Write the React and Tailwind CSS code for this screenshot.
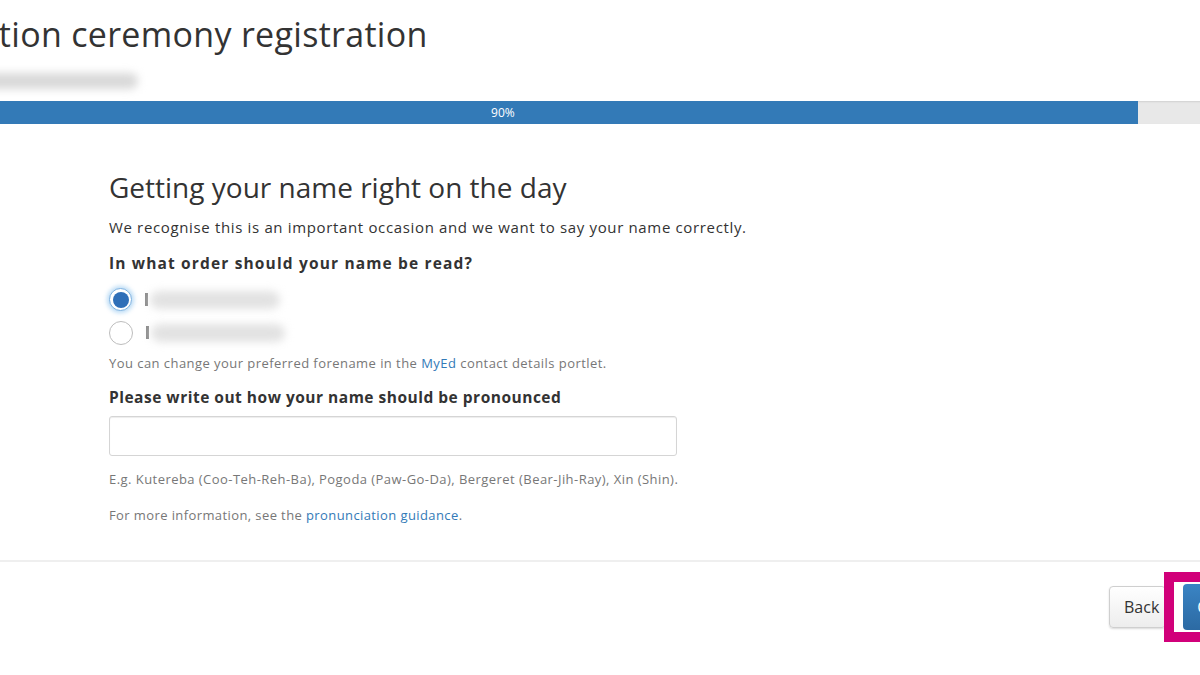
const font = { fontFamily: '"Open Sans", "Noto Sans", sans-serif' };

const Blur = ({ className }) => (
  <div className={`rounded-full blur-[4px] ${className}`} />
);

const Radio = ({ checked, blurWidth }) => (
  <label className="flex h-[33px] items-center gap-[13px]">
    {checked ? (
      <span className="flex h-[23px] w-[23px] items-center justify-center rounded-full border border-[#7fb2e0] bg-white shadow-[0_0_4px_2px_rgba(102,175,233,0.45)]">
        <span className="h-[16px] w-[16px] rounded-full bg-[#2f6fb8]" />
      </span>
    ) : (
      <span className="h-[24px] w-[24px] rounded-full border border-[#bdbdbd] bg-white" />
    )}
    <span className="flex items-center gap-[2px]">
      <span className="h-[13px] w-[3px] bg-[#8a8a8a] blur-[0.5px]" />
      <Blur className={`h-[18px] bg-[#e2e2e2] ${blurWidth}`} />
    </span>
  </label>
);

export default function App() {
  return (
    <div className="h-[675px] w-[1200px] overflow-hidden bg-white text-[#333]" style={font}>
      <div className="-ml-[132px] w-[1411px]">
        <div className="px-[15px] pt-[12px]">
          <h1 className="-ml-[4px] text-[34px] leading-[44px] font-normal tracking-[0.3px] text-[#333]">
            Graduation ceremony registration
          </h1>
          <div className="mt-[15px] flex h-[20px] items-center">
            <Blur className="h-[16px] w-[255px] bg-[#d9d9d9]" />
          </div>
        </div>

        <div className="mt-[10px] flex h-[23px] w-full bg-[#e8e8e8] shadow-[inset_0_1px_2px_rgba(0,0,0,0.1)]">
          <div className="flex w-[90%] items-center justify-center bg-[#337ab7] text-[12px] text-white">
            90%
          </div>
        </div>

        <div className="ml-[241px] w-[640px] pt-[46px]">
          <h2 className="text-[28px] leading-[34px] font-normal text-[#333]">
            Getting your name right on the day
          </h2>
          <p className="mt-[13px] text-[15px] leading-[20px] tracking-[0.65px] text-[#333]">
            We recognise this is an important occasion and we want to say your name correctly.
          </p>
          <p className="mt-[16px] text-[15.5px] leading-[20px] font-bold tracking-[1.15px] text-[#333]">
            In what order should your name be read?
          </p>
          <div className="mt-[10px] flex flex-col">
            <Radio checked blurWidth="w-[130px]" />
            <Radio blurWidth="w-[134px]" />
          </div>
          <p className="mt-[5px] text-[13px] leading-[18px] tracking-[0.45px] text-[#777]">
            You can change your preferred forename in the{' '}
            <span className="text-[#337ab7]">MyEd</span> contact details portlet.
          </p>
          <p className="mt-[15px] text-[15.5px] leading-[20px] font-bold tracking-[0.5px] text-[#333]">
            Please write out how your name should be pronounced
          </p>
          <input
            className="mt-[9px] block h-[40px] w-[568px] rounded-[3px] border border-[#d5d5d5] bg-white px-3 shadow-[inset_0_1px_1px_rgba(0,0,0,0.075)] outline-none"
            type="text"
          />
          <p className="mt-[14px] text-[13px] leading-[18px] tracking-[0.45px] text-[#777]">
            E.g. Kutereba (Coo-Teh-Reh-Ba), Pogoda (Paw-Go-Da), Bergeret (Bear-Jih-Ray), Xin (Shin).
          </p>
          <p className="mt-[18px] text-[13px] leading-[18px] tracking-[0.4px] text-[#777]">
            For more information, see the{' '}
            <span className="text-[#337ab7]">pronunciation guidance</span>.
          </p>
        </div>

        <div className="mt-[36px] h-[2px] w-full bg-[#efefef]" />

        <div className="flex items-center pt-[10px] pl-[1241px]">
          <button className="h-[42px] rounded-[4px] border border-[#cfcfcf] bg-gradient-to-b from-white to-[#ededed] pr-[6px] pl-[14px] text-[16px] text-[#333] shadow-[0_1px_2px_rgba(0,0,0,0.15)]">
            Back
          </button>
          <div className="relative z-10 -ml-[2px] border-[10px] border-[#d1007a] bg-white pt-[2px] pb-[2px] pl-[9px]">
            <button className="block h-[46px] rounded-l-[4px] bg-gradient-to-b from-[#3a84c4] to-[#2c6aa3] pr-[20px] pl-[14px] text-[16px] text-white">
              Continue
            </button>
          </div>
        </div>
      </div>
    </div>
  );
}
